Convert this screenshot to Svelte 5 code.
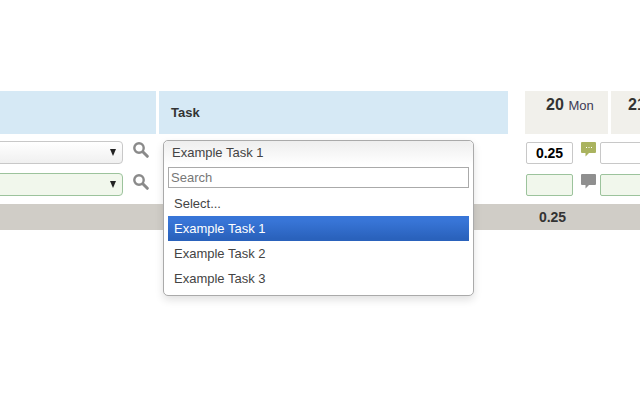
<script>
	const options = ['Select...', 'Example Task 1', 'Example Task 2', 'Example Task 3'];
	let selected = $state('Example Task 1');
</script>

{#snippet searchIcon()}
	<svg class="search" viewBox="0 0 16 16" width="16" height="16">
		<circle cx="6" cy="6" r="4.700" fill="none" stroke="#8a8a8a" stroke-width="2.400" />
		<path d="M9.800 9.800l4.500 4.500" stroke="#8a8a8a" stroke-width="3" stroke-linecap="round" />
	</svg>
{/snippet}

{#snippet bubble(color, dots)}
	<svg class="bubble" viewBox="0 0 15 15" width="15" height="15">
		<path d="M1 0h13a1 1 0 0 1 1 1v9a1 1 0 0 1-1 1H8l-3.500 3.500V11H1a1 1 0 0 1-1-1V1a1 1 0 0 1 1-1z" fill={color} />
		{#if dots}
			<path d="M5 5.500h1M7.500 5.500h1M10 5.500h1" stroke="#fff" stroke-width="1" />
		{/if}
	</svg>
{/snippet}

<div class="sheet">
	<div class="head">
		<div class="h-project"></div>
		<div class="h-task">Task</div>
		<div class="h-day"><b>20</b> <span>Mon</span></div>
		<div class="h-day next"><b>21</b></div>
	</div>

	<div class="row first">
		<div class="fake-select"><i></i></div>
		{@render searchIcon()}
		<div class="task-cell"></div>
		<div class="hours">0.25</div>
		{@render bubble('#aab35f', true)}
		<div class="hours next"></div>
	</div>

	<div class="row second">
		<div class="fake-select new"><i></i></div>
		{@render searchIcon()}
		<div class="task-cell"></div>
		<div class="hours new"></div>
		{@render bubble('#8f8f8f', false)}
		<div class="hours new next"></div>
	</div>

	<div class="total"><span>0.25</span></div>

	<div class="dropdown">
		<div class="current">{selected}</div>
		<input class="filter" type="text" placeholder="Search" />
		<ul>
			{#each options as option}
				<li class:active={option === selected}>{option}</li>
			{/each}
		</ul>
	</div>
</div>

<style>
	:global(body) {
		background: #fff;
		overflow: hidden;
	}

	.sheet {
		position: relative;
		width: 640px;
		height: 400px;
		padding-top: 91px;
		box-sizing: border-box;
		overflow: hidden;
		font-family: 'Liberation Sans', Arial, sans-serif;
		font-size: 13px;
		color: #444;
	}

	.head {
		display: flex;
		height: 43px;
	}

	.h-project {
		width: 156px;
		flex: none;
		background: #d6e9f5;
	}

	.h-task {
		width: 337px;
		flex: none;
		margin-left: 3px;
		padding-left: 12px;
		background: #d6e9f5;
		color: #333;
		font-size: 13px;
		font-weight: bold;
		line-height: 43px;
	}

	.h-day {
		width: 83px;
		flex: none;
		margin-left: 17px;
		padding: 5px 0 0 21px;
		box-sizing: border-box;
		background: #f1f0eb;
		color: #3d3a55;
		font-size: 13px;
	}

	.h-day b {
		color: #333;
		font-size: 16px;
		margin-right: 1px;
	}

	.h-day.next {
		margin-left: 3px;
		padding-left: 17px;
	}

	.row {
		display: flex;
		align-items: center;
		height: 23px;
	}

	.first {
		margin-top: 7px;
	}

	.second {
		margin-top: 9px;
	}

	.fake-select {
		position: relative;
		width: 150px;
		height: 23px;
		flex: none;
		margin-left: -27px;
		box-sizing: border-box;
		border: 1px solid #c8c8c8;
		border-radius: 4px;
		background: linear-gradient(#fff, #f0f0f0);
	}

	.fake-select.new {
		border-color: #9cc39c;
		background: #f1f7ec;
	}

	.fake-select i {
		position: absolute;
		right: 6px;
		top: 7px;
		border-top: 7px solid #222;
		border-left: 3px solid transparent;
		border-right: 3px solid transparent;
	}

	.search {
		flex: none;
		margin: -5px 0 0 10px;
	}

	.task-cell {
		width: 377px;
		flex: none;
	}

	.hours {
		width: 47px;
		height: 22px;
		flex: none;
		box-sizing: border-box;
		border: 1px solid #c8c8c8;
		border-radius: 2px;
		background: #fff;
		color: #000;
		font-size: 14px;
		font-weight: bold;
		line-height: 20px;
		text-align: center;
	}

	.hours.new {
		border-color: #9cc39c;
		background: #f1f7ec;
	}

	.hours.next {
		width: 60px;
		margin-left: 4px;
	}

	.bubble {
		flex: none;
		margin: -6px 0 0 8px;
	}

	.total {
		height: 26px;
		margin-top: 8px;
		background: #d0cdc7;
		color: #333;
		font-size: 14px;
		font-weight: bold;
		line-height: 26px;
	}

	.total span {
		display: block;
		width: 47px;
		margin-left: 529px;
		text-align: center;
	}

	.dropdown {
		position: absolute;
		left: 163px;
		top: 140px;
		width: 311px;
		height: 156px;
		box-sizing: border-box;
		border: 1px solid #aaa;
		border-radius: 5px;
		background: #fff;
		box-shadow: 0 4px 8px rgba(0, 0, 0, 0.12);
		font-size: 13px;
	}

	.current {
		height: 24px;
		padding-left: 8px;
		border-radius: 5px 5px 0 0;
		background: linear-gradient(#eee, #fff);
		line-height: 23px;
	}

	.filter {
		display: block;
		width: 301px;
		height: 21px;
		margin: 2px 0 0 4px;
		padding: 0 2px;
		box-sizing: border-box;
		border: 1px solid #aaa;
		border-radius: 0;
		outline: none;
		color: #444;
		font-family: inherit;
		font-size: 13px;
	}

	.filter::placeholder {
		color: #777;
		opacity: 1;
	}

	ul {
		margin: 3px 4px 0;
		padding: 0;
		list-style: none;
	}

	li {
		height: 25px;
		padding-left: 6px;
		line-height: 25px;
	}

	li.active {
		background: linear-gradient(#3875d7 20%, #2a62bc 90%);
		color: #fff;
	}
</style>
